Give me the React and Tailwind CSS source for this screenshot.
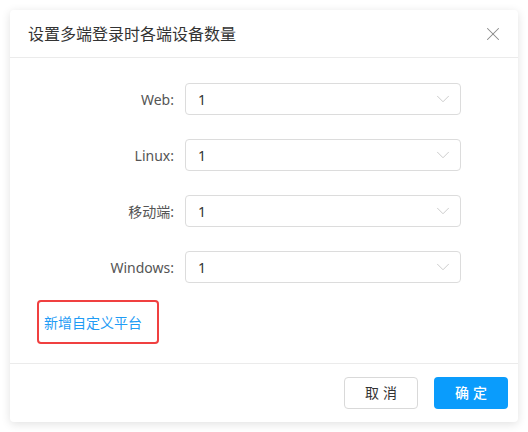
import { X, ChevronDown } from 'lucide-react';

const platforms = ['Web', 'Linux', '移动端', 'Windows'];

export default function App() {
    return (
        <div className="w-[528px] h-[432px] bg-white p-[10px]" style={{ fontFamily: '"Noto Sans", "Noto Sans CJK SC", sans-serif' }}>
            <div className="w-[508px] h-[412px] bg-white rounded-sm shadow-[0_2px_10px_rgba(0,0,0,0.12)] flex flex-col">
                {/* Header */}
                <div className="h-[48px] flex items-center justify-between pl-[18px] pr-[14px] border-b border-[#ebebeb]">
                    <h2 className="text-[16px] text-[#333]">设置多端登录时各端设备数量</h2>
                    <X size={22} strokeWidth={1.1} className="text-[#888]" />
                </div>

                {/* Body */}
                <div className="flex-1 pt-[25px] px-[27px] border-b border-[#ebebeb]">
                    <div className="flex flex-col gap-[24px]">
                        {platforms.map((p) => (
                            <div key={p} className="flex items-center">
                                <label className="w-[148px] pr-[11px] text-right text-[14px] text-[#555]">{p}:</label>
                                <div className="w-[276px] h-[32px] border border-[#dcdcdc] rounded-[4px] flex items-center justify-between pl-[12px] pr-[6px]">
                                    <span className="text-[14px] text-[#333]">1</span>
                                    <ChevronDown size={22} strokeWidth={0.8} className="text-[#bbb]" />
                                </div>
                            </div>
                        ))}
                    </div>
                    <div className="mt-[17px] w-[122px] h-[44px] border-2 border-[#f04040] rounded-[4px] flex items-center pl-[5px]">
                        <span className="text-[14px] text-[#1f9cf5]">新增自定义平台</span>
                    </div>
                </div>

                {/* Footer */}
                <div className="h-[58px] flex items-center justify-end gap-[16px] pr-[10px] pb-[1px]">
                    <button className="w-[74px] h-[32px] border border-[#d9d9d9] rounded-[4px] text-[14px] text-[#333] tracking-[4px] pl-[4px]">取消</button>
                    <button className="w-[74px] h-[32px] bg-[#0a9cfc] rounded-[4px] text-[14px] text-white font-medium tracking-[4px] pl-[4px]">确定</button>
                </div>
            </div>
        </div>
    )
}
